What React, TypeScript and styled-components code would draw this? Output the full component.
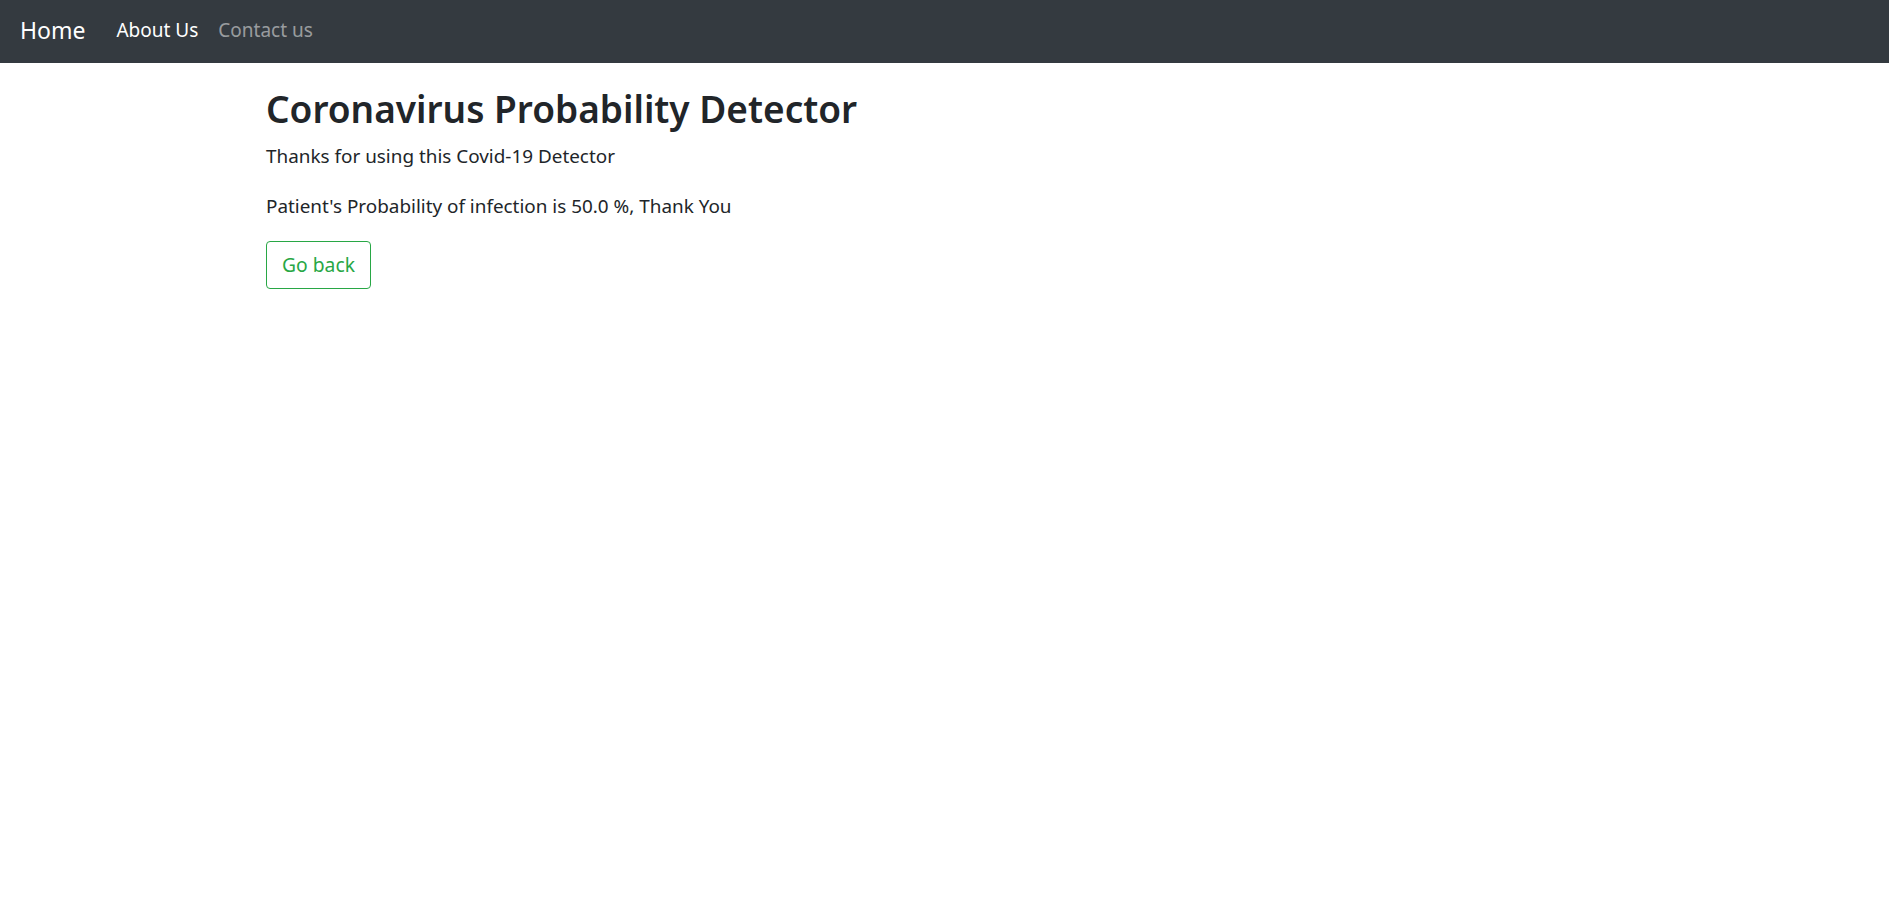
import styled, { createGlobalStyle } from 'styled-components'

const GlobalStyle = createGlobalStyle`
  body {
    margin: 0;
    font-family: 'Noto Sans', 'Open Sans', Arial, sans-serif;
    color: #212529;
    background: #fff;
  }
`

const Navbar = styled.nav`
  height: 63px;
  background-color: #343a40;
  display: flex;
  align-items: center;
  padding: 0 0 4px 20px;
  box-sizing: border-box;
`

const Brand = styled.a`
  font-size: 23px;
  color: #fff;
  text-decoration: none;
  margin-right: 31px;
`

const NavLinks = styled.div`
  display: flex;
  gap: 20px;
`

const NavLink = styled.a<{ $active?: boolean }>`
  font-size: 19px;
  color: ${p => (p.$active ? '#fff' : 'rgba(255, 255, 255, 0.5)')};
  text-decoration: none;
`

const Main = styled.main`
  padding: 24px 0 0 266px;
`

const Title = styled.h1`
  font-size: 37px;
  font-weight: 600;
  line-height: 1.2;
  margin: 0 0 10px;
`

const Text = styled.p`
  font-size: 18.9px;
  line-height: 30px;
  margin: 0 0 20px;
`

const OutlineButton = styled.button`
  font-family: inherit;
  font-size: 19.3px;
  line-height: 30px;
  height: 48px;
  padding: 0 15px;
  color: #28a745;
  background: transparent;
  border: 1px solid #28a745;
  border-radius: 4px;
  cursor: pointer;
`

export default function App() {
  return (
    <>
      <GlobalStyle />
      <Navbar>
        <Brand href="#">Home</Brand>
        <NavLinks>
          <NavLink href="#" $active>About Us</NavLink>
          <NavLink href="#">Contact us</NavLink>
        </NavLinks>
      </Navbar>
      <Main>
        <Title>Coronavirus Probability Detector</Title>
        <Text>Thanks for using this Covid-19 Detector</Text>
        <Text>Patient's Probability of infection is 50.0 %, Thank You</Text>
        <OutlineButton>Go back</OutlineButton>
      </Main>
    </>
  )
}
